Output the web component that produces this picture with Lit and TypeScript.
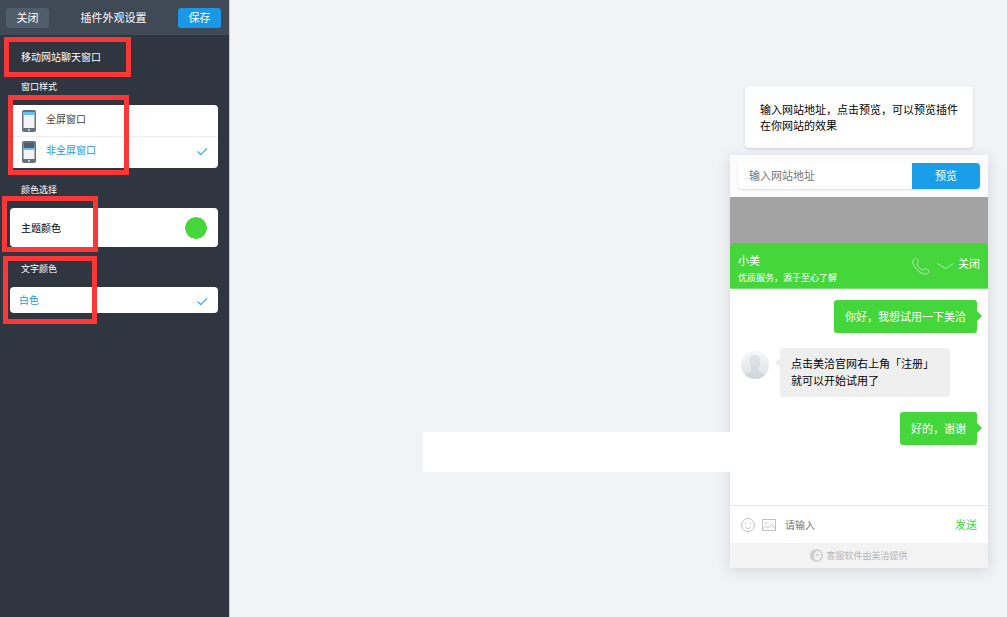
import { LitElement, html, css, svg } from "lit";
import { customElement, state } from "lit/decorators.js";

const tick = html`<svg class="tick" viewBox="0 0 12 9" aria-hidden="true">
  <path d="M1.5 4.4 L4.7 7.6 L11 1.4" fill="none" stroke="#3aa5e8" stroke-width="1.3" />
</svg>`;

const phoneIcon = (partial: boolean) => html`<svg class="device" viewBox="0 0 14 22" aria-hidden="true">
  <rect width="14" height="22" rx="2" fill="#66717e" />
  <rect x="1.5" y="2" width="11" height="16" fill="#f4f4f4" />
  ${partial
    ? svg`<rect x="1.5" y="2" width="11" height="5" fill="#535e6a" /><rect x="1.5" y="7" width="11" height="2" fill="#5ec4fb" />`
    : svg`<rect x="1.5" y="2" width="11" height="3" fill="#5ec4fb" />`}
  <rect x="6" y="19" width="2" height="2" rx="1" fill="#e4e8ec" />
</svg>`;

@customElement("settings-panel")
export class SettingsPanel extends LitElement {
  @state() private mode = "partial";
  @state() private color = "#44d63b";

  static styles = css`
    :host { display: block; color: #fff; font-size: 10px; }
    * { box-sizing: border-box; }
    button, input { font: inherit; }
    header {
      display: flex; align-items: center; justify-content: space-between;
      height: 35px; padding: 0 8px 0 6px; background: #3f4a56; font-size: 11px;
    }
    header button {
      width: 43px; height: 20px; padding: 0 0 2px; border: 0; border-radius: 3px;
      background: #505d6a; color: #fff; line-height: 18px;
    }
    header .save { background: #1a98e5; }
    h1 { margin: 0; padding-bottom: 2px; font-size: 11px; font-weight: 400; }
    .body { padding: 14px 11px 0 10px; }
    .title { position: relative; margin: 0; padding-left: 11px; font-size: 10px; font-weight: 400; line-height: 16px; }
    section { position: relative; }
    h3 { margin: 0; padding: 2px 0 0 11px; height: 40px; font-size: 9px; font-weight: 400; line-height: 40px; }
    fieldset { margin: 0; padding: 0; border: 0; min-width: 0; }
    .card { overflow: hidden; border-radius: 4px; background: #fff; color: #222; }
    .option { display: flex; align-items: center; height: 31px; padding: 0 10px 0 12px; gap: 10px; color: #444; }
    .option span { padding-bottom: 4px; }
    .option + .option { height: 32px; padding-bottom: 2px; border-top: 1px solid #eee; }
    .option input { position: absolute; opacity: 0; }
    .option.on { color: #1d9be6; }
    .option.short { height: 26px; padding: 2px 10px 0 9px; }
    .tick { width: 12px; height: 9px; margin-left: auto; }
    .device { width: 14px; height: 22px; }
    .color { display: flex; align-items: center; justify-content: space-between; height: 39px; padding: 0 11px; color: #000; }
    .color input {
      appearance: none; width: 22px; height: 22px; padding: 0; border: 0;
      border-radius: 50%; overflow: hidden; background: none;
    }
    .color input::-webkit-color-swatch-wrapper { padding: 0; }
    .color input::-webkit-color-swatch { border: 0; border-radius: 50%; }
    .mark { position: absolute; border: 5px solid #fb3837; pointer-events: none; }
    .mark.heading { left: -6px; top: -12px; width: 127px; height: 40px; }
    .mark.styles { left: -2px; top: 30px; width: 121px; height: 80px; }
    .mark.theme { left: -8px; top: 28px; width: 96px; height: 56px; }
    .mark.words { left: -7px; top: 9px; width: 94px; height: 68px; }
  `;

  private option(value: string, text: string) {
    const on = this.mode === value;
    return html`<label class="option ${on ? "on" : ""}">
      <input type="radio" name="mode" .checked=${on} @change=${() => (this.mode = value)} />
      ${phoneIcon(value === "partial")}<span>${text}</span>${on ? tick : ""}
    </label>`;
  }

  render() {
    return html`
      <header><button>关闭</button><h1>插件外观设置</h1><button class="save">保存</button></header>
      <div class="body">
        <h2 class="title">移动网站聊天窗口<span class="mark heading"></span></h2>
        <section>
          <h3>窗口样式</h3>
          <fieldset class="card" aria-label="窗口样式">
            ${this.option("full", "全屏窗口")} ${this.option("partial", "非全屏窗口")}
          </fieldset>
          <span class="mark styles"></span>
        </section>
        <section>
          <h3>颜色选择</h3>
          <label class="card color">主题颜色
            <input type="color" .value=${this.color}
              @input=${(e: Event) => (this.color = (e.target as HTMLInputElement).value)} />
          </label>
          <span class="mark theme"></span>
        </section>
        <section>
          <h3>文字颜色</h3>
          <fieldset class="card" aria-label="文字颜色">
            <label class="option short on"><input type="radio" name="text" checked /><span>白色</span>${tick}</label>
          </fieldset>
          <span class="mark words"></span>
        </section>
      </div>`;
  }
}

@customElement("chat-preview")
export class ChatPreview extends LitElement {
  static styles = css`
    :host { display: block; position: relative; width: 258px; font-size: 11px; }
    * { box-sizing: border-box; }
    button, input { font: inherit; border: 0; padding: 0; background: none; }
    input { min-width: 0; flex: 1; outline: none; }
    input::placeholder { color: #757575; opacity: 1; }
    .tip {
      margin: 0 15px 7px; padding: 15px; border-radius: 4px; background: #fff;
      box-shadow: 0 1px 3px rgba(40, 50, 80, 0.16); color: #000; line-height: 16px;
    }
    .strip { position: absolute; right: 100%; top: 346px; width: 307px; height: 40px; background: #fff; }
    .phone { background: #fff; box-shadow: 0 3px 14px rgba(40, 50, 70, 0.14); }
    .address { padding: 8px; background: #fcfcfc; }
    .bar { display: flex; height: 26px; border-radius: 4px; overflow: hidden; background: #fff; box-shadow: 0 1px 2px rgba(0, 0, 0, 0.14); }
    .bar input { padding: 0 11px 2px; }
    .bar button { width: 68px; padding-bottom: 2px; background: #1a9ee8; color: #fff; }
    .page { padding-top: 46px; background: #a3a3a3; }
    .head {
      display: flex; align-items: center; height: 46px; padding: 0 8px;
      border-radius: 5px 5px 0 0; border-bottom: 1px solid #7de077; background: #44d63b; color: #fff;
    }
    .who { flex: 1; padding-top: 6px; }
    .who strong { display: block; font-weight: 400; line-height: 18px; }
    .who small { display: block; font-size: 9px; line-height: 18px; }
    .head button { display: flex; color: #fff; line-height: 16px; }
    .call svg { width: 18px; height: 18px; }
    .fold { margin: 0 4px 0 7px; }
    .fold svg { width: 17px; height: 8px; }
    .head .exit { padding-bottom: 6px; }
    .log { display: flex; flex-direction: column; gap: 15px; height: 216px; padding: 11px; }
    .msg { position: relative; padding: 8px 11px; border-radius: 3px; line-height: 17px; }
    .mine { align-self: flex-end; background: #44d63b; color: #fff; }
    .mine::after { content: ""; position: absolute; left: 100%; top: 11px; border: 5px solid transparent; border-right: 0; border-left-color: #44d63b; }
    .row { display: flex; gap: 11px; }
    .face { width: 28px; height: 28px; margin-top: 3px; }
    .theirs { width: 170px; padding: 7px 11px 8px; background: #efefef; color: #000; white-space: nowrap; }
    .theirs::before { content: ""; position: absolute; right: 100%; top: 10px; border: 5px solid transparent; border-left: 0; border-right-color: #efefef; }
    .write { display: flex; align-items: center; gap: 7px; height: 38px; padding: 0 11px; border-top: 1px solid #e8e8e8; }
    .write button { display: flex; }
    .write svg { width: 14px; height: 14px; }
    .write input { font-size: 10px; padding-left: 2px; }
    .write .send { padding-bottom: 2px; color: #44d63b; }
    footer { display: flex; align-items: center; justify-content: center; gap: 3px; height: 25px; background: #f3f3f3; color: #b4b6bc; font-size: 9px; }
    footer svg { width: 13px; height: 13px; }
  `;

  render() {
    return html`
      <div class="tip">输入网站地址，点击预览，可以预览插件在你网站的效果</div>
      <div class="strip"></div>
      <div class="phone">
        <div class="address">
          <div class="bar"><input type="url" aria-label="输入网站地址" placeholder="输入网站地址" /><button>预览</button></div>
        </div>
        <div class="page">
          <div class="head">
            <div class="who"><strong>小美</strong><small>优质服务，源于至心了解</small></div>
            <button class="call" aria-label="电话">
              <svg viewBox="0 0 18 18" fill="none" stroke="#b6f0b2" stroke-width="1">
                <path d="M1.8 2.2 C2.6 1.1 4.2.8 5 1.8 C6 3 6.6 4.2 6.2 5.1 C5.9 5.9 4.8 6.3 5 7.2 C5.6 9.4 8.3 12.2 10.5 12.9 C11.5 13.2 11.8 12.1 12.6 11.8 C13.6 11.4 15 12.2 16.3 13.2 C17.3 14 17 15.4 15.9 16.3 C14.7 17.2 13.2 17.4 11.6 16.9 C6.8 15.2 2.4 10.8 1 6.6 C.5 5 .8 3.4 1.8 2.2 Z" />
              </svg>
            </button>
            <button class="fold" aria-label="收起">
              <svg viewBox="0 0 17 8" fill="none" stroke="#b6f0b2"><path d="M.5 1.5 L8.5 6.5 L16.5 1.5" /></svg>
            </button>
            <button class="exit">关闭</button>
          </div>
        </div>
        <div class="log">
          <div class="msg mine">你好，我想试用一下美洽</div>
          <div class="row">
            <svg class="face" viewBox="0 0 28 28" aria-hidden="true">
              <defs>
                <linearGradient id="bg" x2="0" y2="1"><stop stop-color="#f6f7f8" /><stop offset="1" stop-color="#dde1e4" /></linearGradient>
                <linearGradient id="man" x2="0" y2="1"><stop stop-color="#e1e4e7" /><stop offset="1" stop-color="#d0d5d9" /></linearGradient>
                <clipPath id="disc"><circle cx="14" cy="14" r="14" /></clipPath>
              </defs>
              <g clip-path="url(#disc)">
                <rect width="28" height="28" fill="url(#bg)" />
                <path d="M14 4 C17.5 4 19.4 6.2 19.4 10 C19.4 13 18.6 15.5 17.4 17 V19.5 C18 21.8 23.4 21.8 24.6 24.5 V29 H3.4 V24.5 C4.6 21.8 10 21.8 10.6 19.5 V17 C9.4 15.5 8.6 13 8.6 10 C8.6 6.2 10.5 4 14 4 Z" fill="url(#man)" />
              </g>
            </svg>
            <div class="msg theirs">点击美洽官网右上角「注册」<br />就可以开始试用了</div>
          </div>
          <div class="msg mine">好的，谢谢</div>
        </div>
        <div class="write">
          <button aria-label="表情">
            <svg viewBox="0 0 14 14" fill="none" stroke="#c0c0c0"><circle cx="7" cy="7" r="6.5" /><path d="M4.5 4.5 V6 M9.5 4.5 V6 M4 8.6 C5 11 9 11 10 8.6" /></svg>
          </button>
          <button aria-label="图片">
            <svg viewBox="0 0 14 14" fill="none" stroke="#c0c0c0"><rect x=".5" y="1.5" width="13" height="11" /><path d="M1 10.8 L3.8 8.2 L6 10.2 L9.5 6.5 L13 10.5" /><circle cx="4" cy="4.9" r=".5" /></svg>
          </button>
          <input type="text" aria-label="请输入" placeholder="请输入" />
          <button class="send">发送</button>
        </div>
        <footer>
          <svg viewBox="0 0 13 13" aria-hidden="true">
            <circle cx="6.5" cy="6.5" r="5.7" fill="#f3f3f3" stroke="#cdcfd1" stroke-width="1.6" />
            <path d="M1 4 C2.5 1 6 .3 8.6 1.6 C6 2.2 4.2 3.6 4.4 5.6 C4.6 7.8 4 10.2 6 12 C2 12 .2 8 1 4 Z" fill="#cdcfd1" />
            <path d="M6 5 L9.4 5.2 L7.4 8 Z" fill="#cdcfd1" />
          </svg>
          客服软件由美洽提供
        </footer>
      </div>`;
  }
}

@customElement("app-root")
export class AppRoot extends LitElement {
  static styles = css`
    :host {
      display: flex; min-height: 100vh; background: #f1f3f5;
      font-family: "Noto Sans CJK SC", "Liberation Sans", sans-serif;
    }
    .side { flex: none; width: 230px; box-sizing: border-box; border-right: 1px solid #c3c7cb; background: #2f3640; }
    main { flex: 1; display: flex; justify-content: flex-end; align-items: flex-start; padding: 86px 19px 0 0; }
  `;

  render() {
    return html`<settings-panel class="side"></settings-panel><main><chat-preview></chat-preview></main>`;
  }
}
